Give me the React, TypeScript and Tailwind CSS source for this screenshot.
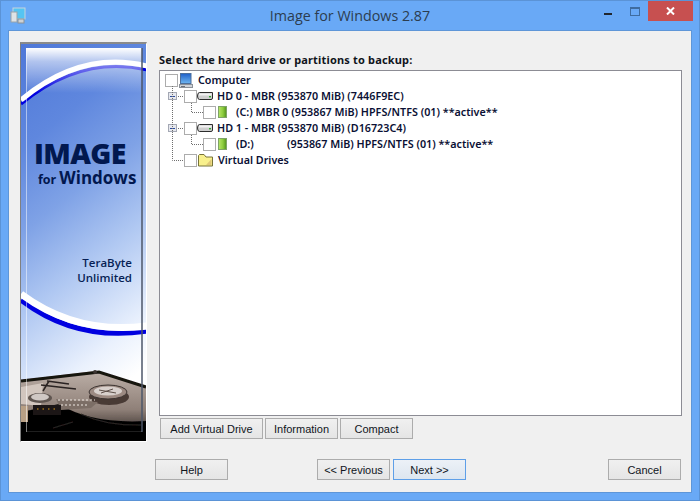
import React from "react";

const tahoma = { fontFamily: '"Noto Sans", sans-serif' };
const btnFont = { fontFamily: '"Liberation Sans", sans-serif' };

function Check() {
  return <span className="block w-[13px] h-[13px] shrink-0 border border-[#acacac] bg-white" />;
}

function Expander() {
  return (
    <span className="w-[9px] h-[8px] shrink-0 border border-[#a4a8b4] bg-[#e6e8ee] flex items-center justify-center">
      <span className="w-[5px] h-px bg-[#2a4a9e]" />
    </span>
  );
}

function ComputerIcon() {
  return (
    <svg width="14" height="15" viewBox="0 0 14 15" className="block shrink-0">
      <defs>
        <linearGradient id="scr" x1="0" x2="0" y1="0" y2="1">
          <stop offset="0" stopColor="#1f5fc8" />
          <stop offset="1" stopColor="#6fb6f0" />
        </linearGradient>
      </defs>
      <rect x="1.5" y="0.5" width="10.5" height="10" fill="url(#scr)" stroke="#4d6f9c" />
      <rect x="0.5" y="11.5" width="13" height="3" fill="#d0d3d8" stroke="#8c9198" />
      <rect x="2" y="13" width="4" height="1" fill="#6a7078" />
    </svg>
  );
}

function DriveIcon() {
  return (
    <svg width="16" height="10" viewBox="0 0 16 10" className="block shrink-0">
      <path d="M2.5 1.5 H15.5 V7 Q15.5 8.5 14 8.5 H2.5 Q0.5 8.5 0.5 5 Q0.5 1.5 2.5 1.5Z" fill="#cfcfcf" stroke="#2c2c2c" />
      <rect x="2" y="2.5" width="12.5" height="2" fill="#f2f2f2" />
      <rect x="12" y="5" width="2" height="1.4" fill="#2fa52f" />
    </svg>
  );
}

function PartIcon() {
  return (
    <svg width="9" height="12" viewBox="0 0 9 12" className="block shrink-0">
      <defs>
        <linearGradient id="pg" x1="0" x2="1" y1="0" y2="0">
          <stop offset="0" stopColor="#b8e66a" />
          <stop offset="0.55" stopColor="#8ccc3c" />
          <stop offset="1" stopColor="#4f8f1c" />
        </linearGradient>
      </defs>
      <rect x="0.5" y="0.5" width="8" height="11" fill="url(#pg)" stroke="#7fa368" />
    </svg>
  );
}

function FolderIcon() {
  return (
    <svg width="15" height="13" viewBox="0 0 15 13" className="block shrink-0">
      <path d="M0.5 12 V1.5 L1.5 0.5 H6 L8 3 H14.5 V12 Z" fill="#f8f08c" stroke="#77733a" />
      <path d="M8 11 L13.5 11 L13.5 5 Z" fill="#e0c878" />
    </svg>
  );
}

function Row({ indent, children }: { indent: string; children: React.ReactNode }) {
  return <div className={`flex items-center h-4 ${indent}`}>{children}</div>;
}

function Btn({ w, children, focus }: { w: string; children: React.ReactNode; focus?: boolean }) {
  return (
    <button
      className={`${w} h-[21px] pt-px flex items-center justify-center text-[11px] text-[#10151c] border ${
        focus ? "border-[#5e9fe8] bg-gradient-to-b from-[#ecf1f7] to-[#dde6f0]" : "border-[#acacac] bg-gradient-to-b from-[#f0f0f0] to-[#e5e5e5]"
      }`}
      style={btnFont}
    >
      {children}
    </button>
  );
}

function Sidebar() {
  return (
    <div className="relative w-[127px] h-[400px] shrink-0 border-t-2 border-l border-t-[#8a8a8a] border-l-[#808080] border-r border-r-white border-b border-b-white overflow-hidden">
      <svg width="125" height="397" viewBox="0 0 125 397" className="absolute left-0 top-0">
        <defs>
          <linearGradient id="sky" x1="0" x2="0.25" y1="0" y2="1">
            <stop offset="0" stopColor="#4f78d8" />
            <stop offset="0.25" stopColor="#5f87de" />
            <stop offset="0.45" stopColor="#7fa2e6" />
            <stop offset="0.65" stopColor="#b0c8f2" />
            <stop offset="0.88" stopColor="#eaf1fd" />
            <stop offset="1" stopColor="#ffffff" />
          </linearGradient>
          <linearGradient id="fade" x1="0" x2="0" y1="0" y2="1">
            <stop offset="0" stopColor="#ffffff" stopOpacity="1" />
            <stop offset="0.3" stopColor="#ffffff" stopOpacity="0.55" />
            <stop offset="1" stopColor="#ffffff" stopOpacity="0" />
          </linearGradient>
          <linearGradient id="body" x1="0" x2="0" y1="0" y2="1">
            <stop offset="0" stopColor="#bcafa7" />
            <stop offset="0.55" stopColor="#8f8078" />
            <stop offset="1" stopColor="#141110" />
          </linearGradient>
          <filter id="soft"><feGaussianBlur stdDeviation="0.45" /></filter>
        </defs>
        <rect width="125" height="397" fill="url(#sky)" />
        <path d="M0 60 Q60 11 126 26" fill="none" stroke="#0000e0" strokeWidth="3" />
        <path d="M0 56 Q60 6 126 22" fill="none" stroke="#ffffff" strokeWidth="5" />
        <path d="M0 256 Q55 298 126 287" fill="none" stroke="#0000e0" strokeWidth="5" />
        <path d="M0 250 Q55 291 126 282" fill="none" stroke="#ffffff" strokeWidth="7" />
        <rect x="5" y="4" width="116" height="45" fill="url(#fade)" />
        <g filter="url(#soft)">
          <path d="M0 336 L73 327 L125 342 V397 H0Z" fill="url(#body)" />
          <path d="M0 337 L70 329 L78 328 L125 343" fill="none" stroke="#16120f" strokeWidth="3" />
          <circle cx="74" cy="328" r="2" fill="#3a3430" />
          <path d="M0 368 L38 360 Q70 380 125 377 V397 H0Z" fill="#060505" />
          <path d="M0 343 L22 339 L20 362 L0 360Z" fill="#d2c6be" />
          <path d="M20 341 L55 345 M26 337 L48 340 M22 347 L28 337" stroke="#2a2422" strokeWidth="1.5" fill="none" />
          <ellipse cx="88" cy="353" rx="20" ry="8" fill="#4a3b36" />
          <ellipse cx="87" cy="348" rx="19" ry="7" fill="#9c8a82" stroke="#3c3431" />
          <ellipse cx="87" cy="347" rx="14" ry="4.5" fill="#d8d0cc" />
          <path d="M78 346 L95 349 M80 349 L92 345" stroke="#5d4f49" strokeWidth="1" />
          <ellipse cx="19" cy="354" rx="12" ry="5" fill="#5e5450" />
          <ellipse cx="19" cy="353" rx="9" ry="3.5" fill="#d0c8c4" />
          <path d="M35 355 L77 358 L70 364 L40 366Z" fill="#7c6e66" />
          <path d="M37 356 H74 M40 361 H68" stroke="#efe8e2" strokeWidth="1" strokeDasharray="2 2" />
          <rect x="12" y="361" width="28" height="10" fill="#1e1612" />
          <path d="M16 365 H36" stroke="#d99a2c" strokeWidth="1.2" strokeDasharray="1.5 4" />
          <path d="M0 362 H7 V378 H0Z" fill="#b89f84" />
          <path d="M32 384 L52 378 M60 370 Q85 382 120 381" stroke="#2a2522" strokeWidth="1" fill="none" />
        </g>
        <rect x="5" y="4" width="1" height="384" fill="#ffffff" opacity="0.5" />
        <rect x="120" y="4" width="2" height="384" fill="#4c5668" opacity="0.75" />
        <rect x="6" y="387" width="115" height="1" fill="#ffffff" opacity="0.12" />
      </svg>
      <div className="absolute left-[13px] top-[96px] text-[#02184f] font-extrabold text-[28.5px] leading-[26px] tracking-[-0.6px]" style={{ fontFamily: '"Open Sans", sans-serif' }}>
        IMAGE
      </div>
      <div className="absolute left-[17px] top-[124px] flex items-baseline gap-[3px] text-[#02184f] font-bold whitespace-nowrap" style={{ fontFamily: '"Open Sans", sans-serif' }}>
        <span className="text-[12.5px] leading-[20px]">for</span>
        <span className="text-[17px] leading-[20px]">Windows</span>
      </div>
      <div className="absolute right-[14px] top-[212px] text-right text-[#071f55] font-semibold text-[11.5px] leading-[14.5px]" style={{ fontFamily: '"Open Sans", sans-serif' }}>
        TeraByte<br />Unlimited
      </div>
    </div>
  );
}

export default function App() {
  return (
    <div className="w-[700px] h-[501px] flex flex-col bg-[#69a9f6] border border-[#5b93d6] overflow-hidden" style={tahoma}>
      <div className="h-[29px] shrink-0 grid grid-cols-[1fr_auto_1fr] items-start">
        <svg width="16" height="17" viewBox="0 0 16 17" className="ml-[9px] mt-[6px]">
          <rect x="3" y="1" width="12" height="11" fill="#55c4f2" stroke="#c8d4dc" />
          <rect x="1" y="5" width="6" height="10" fill="#dfe3e6" stroke="#9aa3a8" />
          <rect x="8" y="12" width="6" height="4" fill="#cdd2d6" stroke="#8b9297" />
        </svg>
        <div className="text-center text-[14.3px] leading-[29px] text-[#2c3d50]" style={{ fontFamily: '"Open Sans", sans-serif' }}>
          Image for Windows 2.87
        </div>
        <div className="flex items-start justify-end">
          <span className="w-[8px] h-[2px] bg-[#20262e] mt-[12px] mr-[18px]" />
          <span className="w-[10px] h-[9px] border border-[#3f6c9f] border-t-2 mt-[6px] mr-[8px]" />
          <span className="w-[45px] h-[20px] bg-[#c75050] flex items-center justify-center mr-[6px]">
            <svg width="9" height="8" viewBox="0 0 9 8">
              <path d="M1 0.5 L8 7.5 M8 0.5 L1 7.5" stroke="#fff" strokeWidth="2" />
            </svg>
          </span>
        </div>
      </div>
      <div className="mx-[7px] mb-[7px] flex-1 bg-[#f0f0f0] border border-[#5e96d8] flex flex-col min-h-0">
        <div className="flex pl-[11px] pt-[11px]">
          <Sidebar />
          <div className="ml-[12px] flex flex-col w-[523px]">
            <div className="text-[11px] leading-[14px] font-bold text-[#10151c] mt-[11px] mb-[3px] tracking-[0.17px]">
              Select the hard drive or partitions to backup:
            </div>
            <div className="relative h-[346px] bg-white border border-[#8c8c94] pt-px text-[10.75px] font-semibold text-[#0a1034]">
              <svg width="60" height="100" className="absolute left-[9px] top-[12px]">
                <g fill="none" stroke="#6e6e6e" strokeDasharray="1 1">
                  <path d="M3.5 3 V77.5 H15" />
                  <path d="M9 13.5 H15" />
                  <path d="M9 45.5 H15" />
                  <path d="M22.5 18 V29.5 H34" />
                  <path d="M22.5 50 V61.5 H34" />
                </g>
              </svg>
              <Row indent="pl-[5px]">
                <Check />
                <span className="ml-[1px]"><ComputerIcon /></span>
                <span className="ml-[5px] relative">Computer</span>
              </Row>
              <Row indent="pl-[8px]">
                <Expander />
                <span className="ml-[7px] relative"><Check /></span>
                <span className="relative"><DriveIcon /></span>
                <span className="ml-[4px] relative">HD 0 - MBR (953870 MiB) (7446F9EC)</span>
              </Row>
              <Row indent="pl-[43px]">
                <Check />
                <span className="ml-[2px]"><PartIcon /></span>
                <span className="ml-[9px] relative">(C:) MBR 0 (953867 MiB) HPFS/NTFS (01) **active**</span>
              </Row>
              <Row indent="pl-[8px]">
                <Expander />
                <span className="ml-[7px] relative"><Check /></span>
                <span className="relative"><DriveIcon /></span>
                <span className="ml-[4px] relative">HD 1 - MBR (953870 MiB) (D16723C4)</span>
              </Row>
              <Row indent="pl-[43px]">
                <Check />
                <span className="ml-[2px]"><PartIcon /></span>
                <span className="ml-[9px] relative w-[51px]">(D:)</span>
                <span className="relative">(953867 MiB) HPFS/NTFS (01) **active**</span>
              </Row>
              <Row indent="pl-[24px]">
                <Check />
                <span className="ml-px"><FolderIcon /></span>
                <span className="ml-[5px] relative">Virtual Drives</span>
              </Row>
            </div>
            <div className="flex gap-[2px] ml-[1px] mt-[2px]">
              <Btn w="w-[103px]">Add Virtual Drive</Btn>
              <Btn w="w-[73px]">Information</Btn>
              <Btn w="w-[73px]">Compact</Btn>
            </div>
          </div>
        </div>
        <div className="flex pl-[146px] mt-[17px]">
          <Btn w="w-[73px]">Help</Btn>
          <span className="w-[89px]" />
          <Btn w="w-[73px]">&lt;&lt; Previous</Btn>
          <span className="w-[3px]" />
          <Btn w="w-[73px]" focus>Next &gt;&gt;</Btn>
          <span className="w-[142px]" />
          <Btn w="w-[73px]">Cancel</Btn>
        </div>
      </div>
    </div>
  );
}
